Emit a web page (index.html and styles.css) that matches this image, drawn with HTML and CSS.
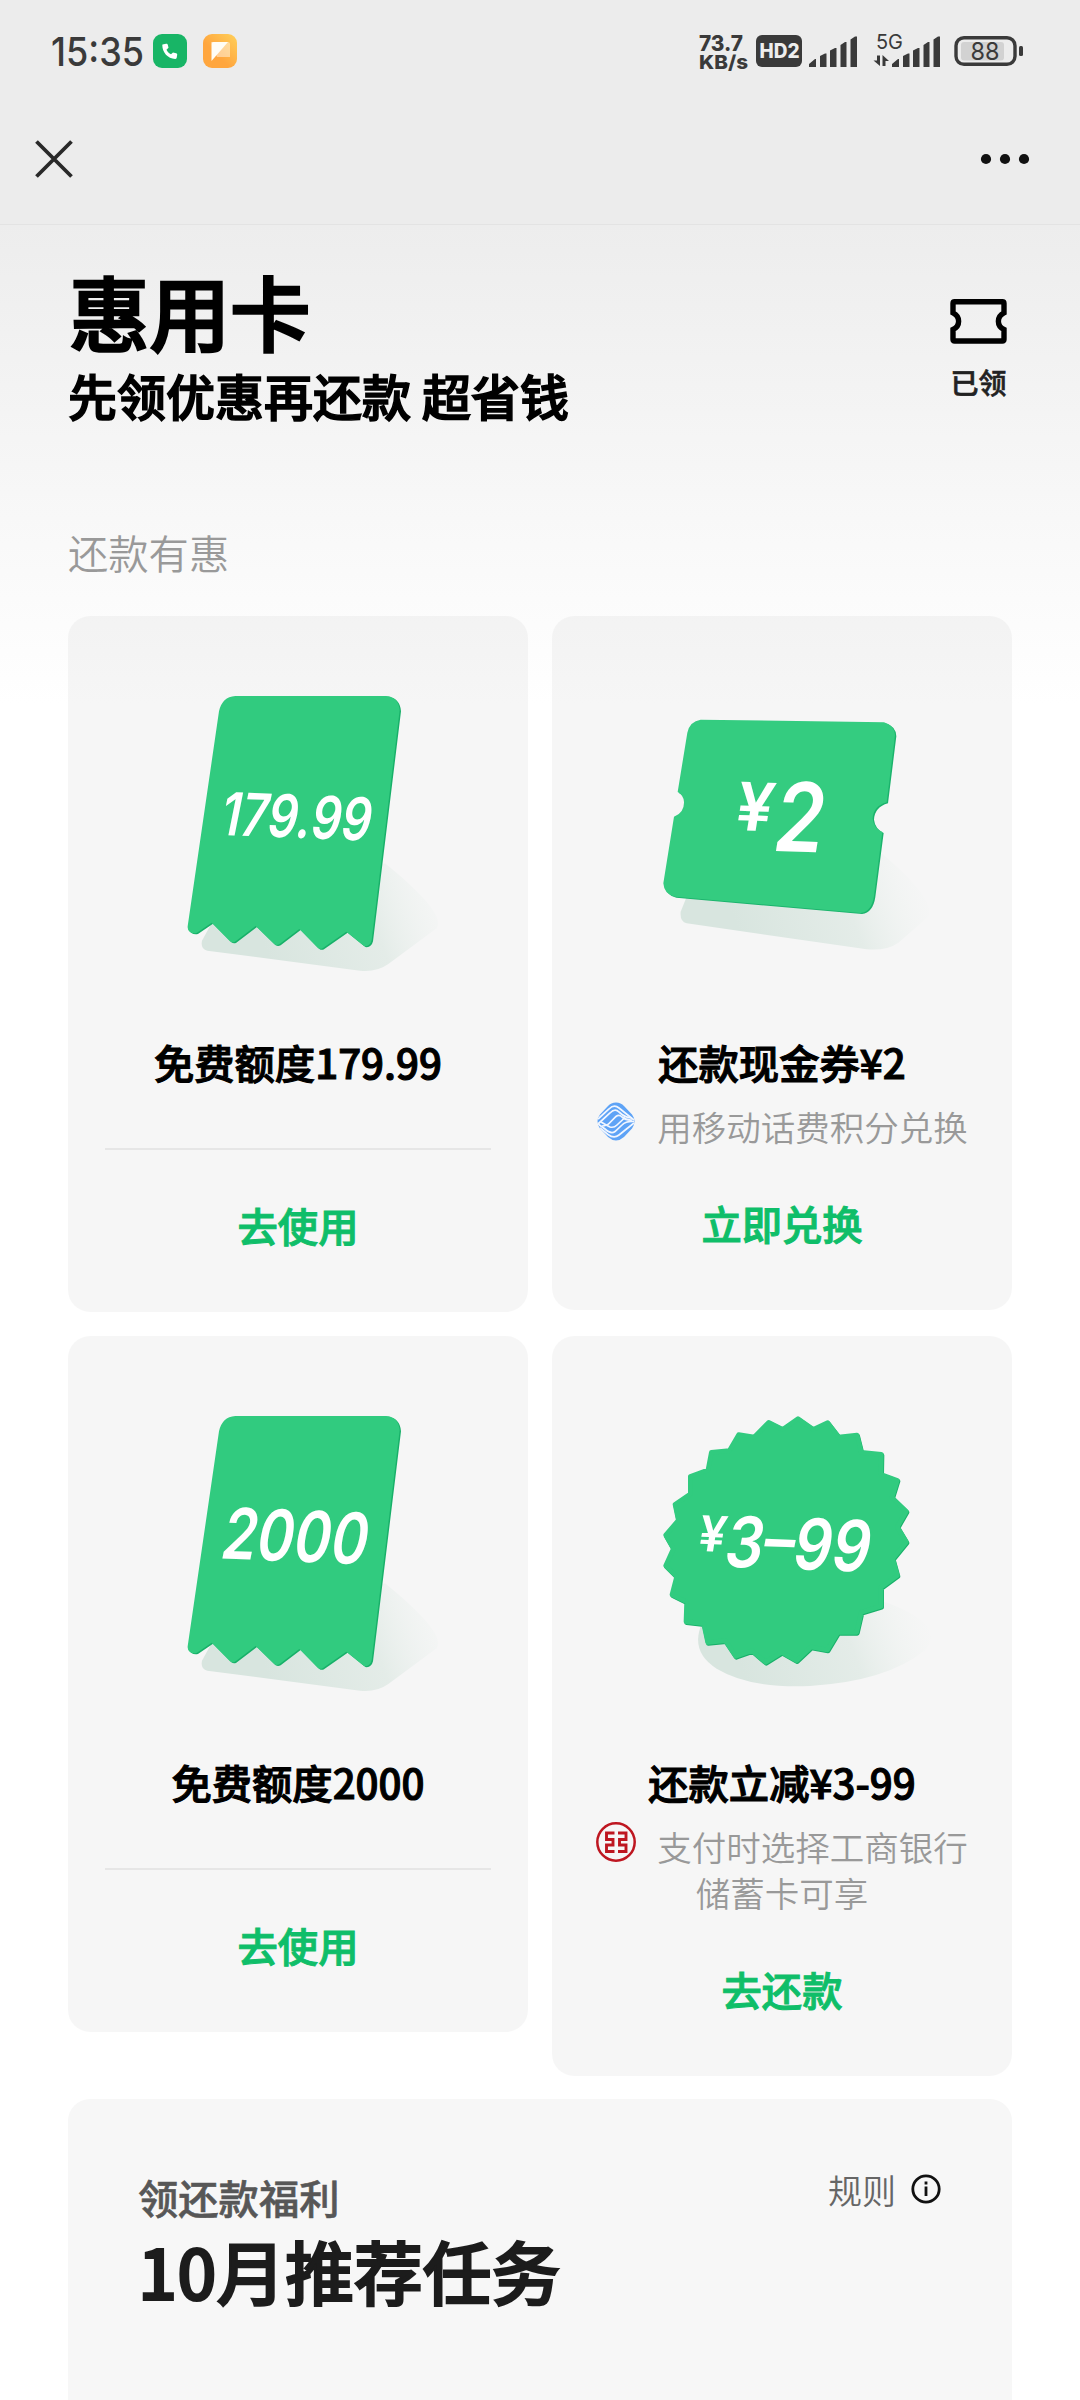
FILE: index.html
```html
<!DOCTYPE html>
<html lang="zh-CN">
<head>
<meta charset="utf-8">
<title>惠用卡</title>
<link rel="stylesheet" href="styles.css">
</head>
<body>
<svg class="defs" width="0" height="0" aria-hidden="true">
  <defs>
    <linearGradient id="shade" gradientUnits="userSpaceOnUse" x1="620" y1="1060" x2="1190" y2="850">
      <stop offset="0" stop-color="#d8e5df"/>
      <stop offset=".55" stop-color="#e4ece8"/>
      <stop offset="1" stop-color="#f4f6f5" stop-opacity="0"/>
    </linearGradient>
    <linearGradient id="note" x1="1" y1="0" x2="0" y2="1">
      <stop offset="0" stop-color="#ffd05a"/>
      <stop offset=".6" stop-color="#ffa63e"/>
    </linearGradient>
    <path id="receipt" d="M528 289H980Q1018 291 1021 332L937 1022Q932 1042 914 1039L861 996 790 1046Q783 1050 775 1044L720 988 660 1034Q652 1038 645 1034L589 979 527 1026Q519 1030 512 1025L457 969 413 999Q403 1004 391 996 384 990 385 980L479 335Q488 292 528 289Z"/>
    <path id="receipt-shade" d="M457 965L426 1022Q421 1048 442 1052L900 1112Q950 1117 985 1092L1130 985Q1160 940 975 790Z"/>
    <path id="coupon" d="M485 361L1035 369Q1067 378 1068 408L1043 609Q1003 620 1001 658 1004 685 1030 698L1005 890Q998 937 965 941L408 892Q375 885 373 852L405 652Q436 640 435 608 434 588 416 578L445 400Q452 366 485 361Z"/>
    <path id="seal" stroke-width="14" stroke-linejoin="round" d="M774 265L820 297 863 277 896 320 951 314 964 366 1024 372 1023 432 1072 450 1056 502 1099 543 1072 590 1099 635 1058 685 1072 735 1023 771 1023 828 964 846 950 906 894 906 862 959 813 950 770 991 725 966 677 996 636 961 587 978 556 931 503 936 491 880 438 874 440 815 396 793 410 739 377 706 400 655 377 614 415 570 405 522 451 491 451 438 504 419 514 366 568 361 596 313 643 320 686 276 728 297Z"/>
  </defs>
</svg>

<header class="topbar">
  <div class="status">
    <div class="status-left">
      <svg class="clock" viewBox="0 0 100 50"><text x="2" y="38" textLength="93" lengthAdjust="spacingAndGlyphs">15:35</text></svg>
      <svg class="app-icon" viewBox="0 0 34 34"><rect width="34" height="34" rx="9" fill="#18b566"/><path fill="#fff" d="M9.500 10.500l3.600-.8c.9-.2 1.500.4 1.700 1.100l.7 3-2 1.900c1 2.200 2.500 3.600 4.500 4.600l2-1.900 3.100.8c.8.2 1.200.8 1.100 1.600l-.5 3c-.1.7-.7 1.200-1.500 1.100-7.500-.4-12.900-6.500-12.900-14z"/></svg>
      <svg class="app-icon" viewBox="0 0 34 34"><rect width="34" height="34" rx="9" fill="url(#note)"/><path fill="#fff" fill-opacity=".45" d="M8 8h17q2 0 2 2v13H14z"/><path fill="#fffdf6" d="M8.500 10q0-2 2-2H25L8.500 27z"/></svg>
    </div>
    <svg class="status-right" viewBox="690 28 340 48" fill="#3a3a3a">
      <text class="heavy" x="699" y="51" font-size="22" textLength="44" lengthAdjust="spacingAndGlyphs">73.7</text>
      <text class="heavy" x="699" y="69" font-size="19" textLength="49" lengthAdjust="spacingAndGlyphs">KB/s</text>
      <rect x="756" y="35" width="46" height="32" rx="6"/>
      <text class="heavy" x="759.500" y="58" font-size="19.500" fill="#eee" textLength="40" lengthAdjust="spacingAndGlyphs">HD2</text>
      <g id="bars"><path d="M809 67V64L815 59H816V67ZM820 67V56L825 53.500H826.500V67ZM830 67V50.500L835 48H836.500V67ZM840.500 67V45L845 42H846.500V67ZM850.500 67V39.500L855 36.500H857V67Z"/></g>
      <use href="#bars" x="83"/>
      <text class="plain" x="876" y="49" font-size="20.500" textLength="27" lengthAdjust="spacingAndGlyphs">5G</text>
      <path d="M877 55.500h3V66l-6.500-5.500H877zM882.500 66V55l6.500 6h-3.500v5z"/>
      <rect x="956" y="37.700" width="59" height="26.600" rx="8" fill="none" stroke="#3a3a3a" stroke-width="3.400"/>
      <rect x="961" y="42" width="43" height="18.500" rx="3" fill="#d2d2d2"/>
      <rect x="1019" y="46" width="4" height="10" rx="1.500"/>
      <text class="plain" x="970.500" y="60" font-size="24" textLength="29" lengthAdjust="spacingAndGlyphs">88</text>
    </svg>
  </div>
  <nav class="navbar">
    <svg class="close" viewBox="0 0 38 38"><path d="M1.500 1.500l35 35M36.500 1.500l-35 35" stroke="#292929" stroke-width="3.800"/></svg>
    <svg class="more" viewBox="0 0 50 12"><circle cx="6" cy="6" r="5.100"/><circle cx="25" cy="6" r="5.100"/><circle cx="44" cy="6" r="5.100"/></svg>
  </nav>
</header>

<main class="page">
  <section class="hero">
    <div>
      <h1>惠用卡</h1>
      <p class="slogan">先领优惠再还款 超省钱</p>
    </div>
    <div class="claimed">
      <svg viewBox="0 0 57 45"><path d="M3 4.500Q3 2.800 4.700 2.800H52.300Q54 2.800 54 4.500V13.800C46.500 17.500 46.500 27 54 30.500V40.300Q54 42 52.300 42H4.700Q3 42 3 40.300V30.500C10.500 27 10.500 17.500 3 13.800Z" fill="none" stroke="#000" stroke-width="5.400"/></svg>
      <span>已领</span>
    </div>
  </section>

  <h2 class="section-title">还款有惠</h2>

  <section class="offers">
    <article class="card">
      <svg class="art" viewBox="24 48 1380 1254">
        <use href="#receipt-shade" fill="url(#shade)"/>
        <use href="#receipt" fill="#18b069" x="2" y="2"/>
        <use href="#receipt" fill="#31cb7f" x="-2" y="-1"/>
        <text transform="translate(474 704) rotate(2.300) skewX(-9)" font-size="178" textLength="452" lengthAdjust="spacingAndGlyphs">179.99</text>
      </svg>
      <h3>免费额度179.99</h3>
      <hr>
      <a class="action">去使用</a>
    </article>

    <article class="card">
      <svg class="art" viewBox="36 48 1380 1254">
        <path fill="url(#shade)" d="M440 890L422 935Q419 965 440 970L980 1048Q1040 1053 1075 1028L1165 950Q1190 900 1025 760Z"/>
        <use href="#coupon" fill="#1bb36c" x="1" y="1"/>
        <use href="#coupon" fill="#34cc80" x="-3" y="-2"/>
        <text transform="translate(578 690) rotate(2) skewX(-7)" font-size="200" textLength="112" lengthAdjust="spacingAndGlyphs">¥</text>
        <text transform="translate(692 752) rotate(2) skewX(-7)" font-size="288" textLength="150" lengthAdjust="spacingAndGlyphs">2</text>
      </svg>
      <h3>还款现金券¥2</h3>
      <p class="note"><svg class="brand" viewBox="0 0 40 40"><defs><clipPath id="cm"><path d="M20 .5Q25 .5 28 4L36 12.500Q41 19 36 26.500L28 35Q20 42 12 35L4 26.500Q-1 19 4 12.500L12 4Q15 .5 20 .5Z"/></clipPath></defs><g clip-path="url(#cm)"><rect width="40" height="40" fill="#5ea3f6"/><g fill="none" stroke="#f1f6ff" stroke-width="1.700"><path d="M2 17L13 7Q18 2 23 6L38 18"/><path d="M2 22L14 11Q19 6 23 10L26 12.500Q29 15 35 16"/><path d="M6 24Q11 24 14 20.500L20 14.500Q23 12 26 15Q30 18.500 36 18"/><path d="M5 20Q10 23 14 25Q18 26 21 23L29 15.500"/><path d="M2 22L9 27Q15 32.500 19 29.500L26 23Q30 19 38 19.500"/><path d="M4 26L12 32.500Q18 37 23 33L38 21"/></g></g></svg>用移动话费积分兑换</p>
      <a class="action">立即兑换</a>
    </article>

    <article class="card">
      <svg class="art" viewBox="24 17 1380 1254">
        <g transform="translate(0 -31)">
          <use href="#receipt-shade" fill="url(#shade)"/>
          <use href="#receipt" fill="#18b069" x="2" y="2"/>
          <use href="#receipt" fill="#31cb7f" x="-2" y="-1"/>
        </g>
        <text transform="translate(476 684) rotate(2.300) skewX(-9)" font-size="212" textLength="438" lengthAdjust="spacingAndGlyphs">2000</text>
      </svg>
      <h3>免费额度2000</h3>
      <hr>
      <a class="action">去使用</a>
    </article>

    <article class="card">
      <svg class="art" viewBox="36 17 1380 1254">
        <path fill="url(#shade)" d="M485 880Q450 965 530 1015 630 1075 810 1067 1040 1053 1155 960 1225 880 1020 810Z"/>
        <use href="#seal" fill="#18b069" stroke="#18b069" x="2" y="3"/>
        <use href="#seal" fill="#31cb7f" stroke="#31cb7f"/>
        <text transform="translate(469 662) rotate(2) skewX(-7)" font-size="148" textLength="82" lengthAdjust="spacingAndGlyphs">¥</text>
        <text transform="translate(545 709) rotate(2) skewX(-9)" font-size="212" textLength="436" lengthAdjust="spacingAndGlyphs">3–99</text>
      </svg>
      <h3>还款立减¥3-99</h3>
      <p class="note"><svg class="brand" viewBox="0 0 40 40"><g fill="none" stroke="#be1620"><circle cx="20" cy="20" r="18.700" stroke-width="2.500"/><path stroke-width="2.900" d="M18.500 11H10.500V17.500H17V23H10.500V29.500H18.500M22 11H30V17.500H23.500V23H30V29.500H22"/></g></svg>支付时选择工商银行<br>储蓄卡可享</p>
      <a class="action">去还款</a>
    </article>
  </section>

  <section class="tasks">
    <div>
      <p class="tasks-kicker">领还款福利</p>
      <h2>10月推荐任务</h2>
    </div>
    <a class="rules">规则<svg viewBox="0 0 30 30"><circle cx="15" cy="15" r="13.200" fill="none" stroke="#111" stroke-width="2.800"/><path d="M13.600 12.500h2.800V22h-2.800zM13.600 7.500h2.800v3h-2.800z" fill="#111"/></svg></a>
  </section>
</main>
</body>
</html>
```
FILE: styles.css
```css
* {
  box-sizing: border-box;
  margin: 0;
  padding: 0;
}

body {
  width: 1080px;
  height: 2400px;
  overflow: hidden;
  background: #fff;
  font-family: "Noto Sans CJK SC", sans-serif;
  font-size: 40.3px;
}

svg {
  display: block;
  flex: none;
}

.defs {
  position: absolute;
}

.topbar {
  height: 225px;
  background: #ececec;
  border-bottom: 1px solid #e3e3e3;
}

.status {
  display: flex;
  justify-content: space-between;
  height: 104px;
  padding: 28px 50px 0 49px;
}

.status-left {
  display: flex;
  align-items: flex-start;
}

.clock {
  width: 100px;
  height: 50px;
  margin-right: 4px;
  overflow: visible;
  fill: #3a3a3a;
  font: 500 39.5px Inter, sans-serif;
}

.app-icon {
  width: 34px;
  height: 34px;
  margin-top: 6px;
  margin-right: 16px;
}

.status-right {
  width: 340px;
  height: 48px;
}

.status-right text {
  font-family: Inter, sans-serif;
}

.heavy {
  font-weight: 800;
}

.plain {
  font-weight: 400;
}

.navbar {
  display: flex;
  align-items: center;
  justify-content: space-between;
  height: 110px;
  padding: 0 50px 0 35px;
}

.close {
  width: 38px;
  height: 38px;
}

.more {
  width: 50px;
  height: 12px;
  fill: #111;
}

.page {
  height: 2175px;
  padding: 35px 68px 0;
  background: linear-gradient(#ededed, #fff 480px);
}

.hero {
  display: flex;
  justify-content: space-between;
}

h1 {
  padding-left: 1px;
  font-size: 80.5px;
  line-height: 100px;
  font-weight: 500;
  -webkit-text-stroke: 2.6px currentColor;
}

.slogan {
  font-size: 49px;
  line-height: 70px;
  font-weight: 500;
  -webkit-text-stroke: 1.6px currentColor;
}

.claimed {
  display: flex;
  flex-direction: column;
  align-items: center;
  gap: 18px;
  padding: 39px 5px 0 0;
  color: #222;
  font-size: 28px;
  font-weight: 500;
  line-height: 40px;
  -webkit-text-stroke: 0.6px currentColor;
}

.claimed svg {
  width: 57px;
  height: 45px;
}

.section-title {
  margin-top: 94px;
  margin-bottom: 36px;
  color: #999;
  font-size: 40.3px;
  font-weight: 350;
  line-height: 56px;
}

.offers {
  display: grid;
  grid-template-columns: 460px 460px;
  gap: 24px;
  align-items: start;
}

.card {
  display: flex;
  flex-direction: column;
  padding-bottom: 58px;
  border-radius: 22px;
  background: rgba(0, 0, 0, 0.035);
  text-align: center;
}

.art {
  width: 460px;
  height: 418px;
  fill: #fff;
  font: 600 180px Inter, sans-serif;
}

.card h3 {
  font-size: 40.3px;
  font-weight: 500;
  line-height: 56px;
  -webkit-text-stroke: 1.1px currentColor;
}

.card hr {
  height: 2px;
  margin: 58px 37px 47px;
  border: 0;
  background: #e6e6e6;
}

.card hr + .action {
  margin-top: 0;
}

.note {
  margin-top: 13px;
  color: #999;
  font-size: 34.5px;
  font-weight: 350;
  line-height: 46px;
}

.brand {
  display: inline-block;
  width: 40px;
  height: 40px;
  margin-top: -8px;
  margin-right: 21px;
  vertical-align: -1px;
}

.action {
  margin-top: 46px;
  margin-bottom: 1px;
  color: #0fbe69;
  font-weight: 500;
  line-height: 56px;
  -webkit-text-stroke: 1px currentColor;
}

.tasks {
  display: flex;
  justify-content: space-between;
  height: 400px;
  margin-top: 23px;
  padding: 70px 71px 0 70px;
  border-radius: 22px;
  background: #f7f7f7;
}

.tasks-kicker {
  color: #575757;
  font-weight: 500;
  line-height: 56px;
  -webkit-text-stroke: 0.6px currentColor;
}

.tasks h2 {
  margin-top: -3px;
  color: #1c1c1c;
  font-size: 68.8px;
  font-weight: 500;
  line-height: 96px;
  -webkit-text-stroke: 2.2px currentColor;
}

.rules {
  display: flex;
  align-items: center;
  gap: 15px;
  height: 40px;
  color: #666;
  font-size: 34px;
  font-weight: 350;
}

.rules svg {
  width: 30px;
  height: 30px;
}
```
